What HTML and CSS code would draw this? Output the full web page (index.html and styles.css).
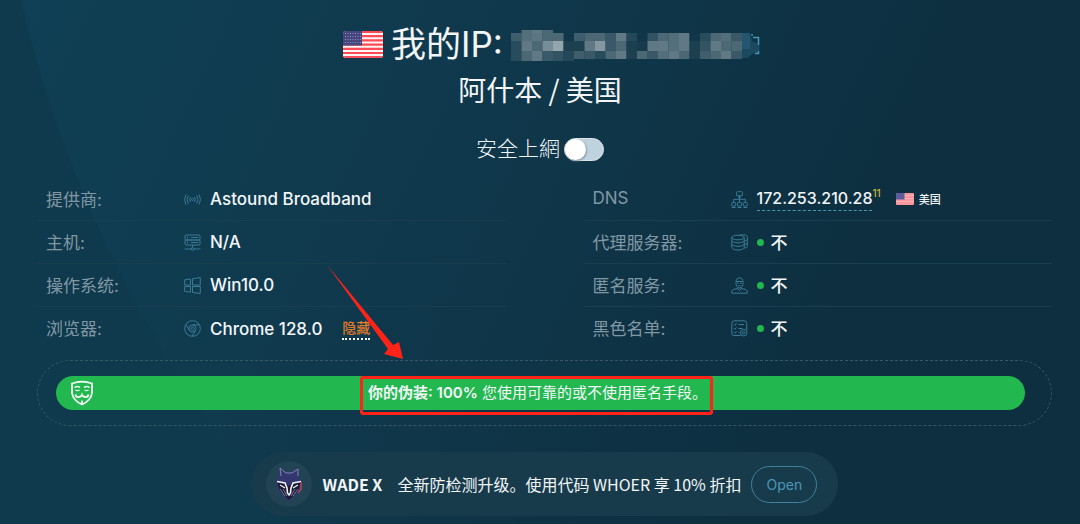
FILE: index.html
```
<!DOCTYPE html>
<html lang="zh">
<head>
    <meta charset="UTF-8">
    <meta name="viewport" content="width=device-width, initial-scale=1.0">
    <title>我的IP</title>
    <link rel="stylesheet" href="styles.css">
</head>
<body>
    <svg class="sprite" aria-hidden="true">
        <symbol id="flag-us" viewBox="0 0 40 27" preserveAspectRatio="none">
            <rect width="40" height="27" fill="#fff3f3"/>
            <path d="M0 1h40M0 5.200h40M0 9.400h40M0 13.600h40M0 17.800h40M0 22h40M0 26h40" stroke="#ff4b55" stroke-width="2.200"/>
            <rect width="19" height="14.500" fill="#46467f"/>
            <path d="M2 2.500h16M2 5.500h16M2 8.500h16M2 11.500h16" stroke="#8f8fc4" stroke-width="1" stroke-dasharray="1 1.500"/>
        </symbol>
        <symbol id="flag-us-small" viewBox="0 0 18 12" preserveAspectRatio="none">
            <rect width="18" height="12" fill="#f7969c"/>
            <path d="M0 2.500h18M0 5.500h18M0 8.500h18" stroke="#fbb0b4" stroke-width="1"/>
            <rect width="8.500" height="6.500" fill="#5c5c9c"/>
        </symbol>
    </svg>

    <header class="header">
        <h1 class="ip">
            <svg class="flag"><use href="#flag-us"/></svg>
            <span>我的IP:</span>
            <svg class="masked" viewBox="0 0 250 32" role="img" aria-label="IP">
                <g id="mask"></g>
                <path d="M231 3h6q4 3 4 8l7 3q2 5-1 8l-6 2-4 4h-6z" fill="#1b4a5f"/>
                <path d="M231 3h8v16h-8z" fill="#245671"/>
                <path d="M241 4v2M242 7.500h5.500V15M247.500 21v2.500H244" fill="none" stroke="#4596b8" stroke-width="1.500"/>
            </svg>
        </h1>
        <div class="city">阿什本 / 美国</div>
        <label class="safe">
            <span>安全上網</span>
            <input class="switch" type="checkbox">
        </label>
    </header>

    <main class="main">
        <div class="columns">
            <dl class="list">
                <div class="row">
                    <dt>提供商:</dt>
                    <dd>
                        <svg class="icon" viewBox="0 0 17 17"><circle cx="8.500" cy="8.500" r="1"/><path d="M6.500 6q-1.500 2.500 0 5M4.300 4.500q-2.600 4 0 8M2 3.500q-3 5 0 10M10.500 6q1.500 2.500 0 5M12.700 4.500q2.600 4 0 8M15 3.500q3 5 0 10"/></svg>
                        <span>Astound Broadband</span>
                    </dd>
                </div>
                <div class="row">
                    <dt>主机:</dt>
                    <dd>
                        <svg class="icon" viewBox="0 0 17 17"><rect x="1" y="1" width="15" height="5" rx="1"/><rect x="1" y="6" width="15" height="5" rx="1"/><path d="M3.500 2.500v2M3.500 7.500v2M7 3.500h7M7 8.500h7M8.500 11v2.500M.5 15h6.500M10 15h6.500"/><circle cx="8.500" cy="15" r="1.300"/></svg>
                        <span>N/A</span>
                    </dd>
                </div>
                <div class="row">
                    <dt>操作系统:</dt>
                    <dd>
                        <svg class="icon" viewBox="0 0 17 17"><path d="M.7 2.800L6.500 2v6H.7zM8.500 1.700L16.300.6V8H8.500zM.7 9.500h5.800v5.700l-5.800-.8zM8.500 9.500h7.800v7l-7.800-1.100z"/></svg>
                        <span>Win10.0</span>
                    </dd>
                </div>
                <div class="row">
                    <dt>浏览器:</dt>
                    <dd>
                        <svg class="icon" viewBox="0 0 17 17"><circle cx="8.500" cy="8.500" r="7.800"/><circle cx="8.500" cy="8.500" r="3.600"/><circle cx="8.500" cy="8.500" r="1.500"/><path d="M8.500 4.900h7M5.300 10.200L1.800 4.600M11.600 10.400L8 16.200"/></svg>
                        <span>Chrome 128.0</span>
                        <a class="hide" href="#">隐藏</a>
                    </dd>
                </div>
            </dl>
            <dl class="list">
                <div class="row">
                    <dt>DNS</dt>
                    <dd>
                        <svg class="icon" viewBox="0 0 17 17"><rect x="5.500" y=".7" width="6" height="4" rx=".8"/><rect x=".7" y="11.500" width="4" height="3.500" rx=".8"/><rect x="6.500" y="11.500" width="4" height="3.500" rx=".8"/><rect x="12.300" y="11.500" width="4" height="3.500" rx=".8"/><path d="M8.500 4.700v6.800M2.700 11.500V8.300h11.600v3.200M.7 16.500h4M6.500 16.500h4M12.300 16.500h4M7 6.200h3"/></svg>
                        <a class="dns" href="#">172.253.210.28</a><sup class="count">11</sup>
                        <svg class="flag-small"><use href="#flag-us-small"/></svg>
                        <span class="country">美国</span>
                    </dd>
                </div>
                <div class="row">
                    <dt>代理服务器:</dt>
                    <dd>
                        <svg class="icon" viewBox="0 0 17 17"><ellipse cx="7" cy="3.500" rx="6.200" ry="2.300"/><path d="M.8 3.500v3q1 2.300 6.200 2.300t6.200-2.300v-3M.8 6.500v3.500q1 2.300 6.200 2.300t6.200-2.300V6.500M.8 10v3.500q1 2.500 6.200 2.500t6.200-2.500V10M8 1.200q8-1.200 8.300 1.500v2.500q-.3 1.500-3 2M16.300 5.200v3.500q-.3 1.500-3 2M16.300 8.700v3.500q-.3 1.500-3 2"/></svg>
                        <i class="dot"></i>
                        <span>不</span>
                    </dd>
                </div>
                <div class="row">
                    <dt>匿名服务:</dt>
                    <dd>
                        <svg class="icon" viewBox="0 0 17 17"><path d="M5 5.500Q5 .8 8.500.8T12 5.500v2Q11 11 8.500 11T5 7.500zM5 4.500h7M6.300 6.200h1.500M9.200 6.200h1.500M7.500 8.500h2M6.800 10.500v1.500l1.700 1.500 1.700-1.500v-1.500M6.800 11.500Q1 12 .8 14v2.200h15.400V14q-.2-2-6-2.500"/></svg>
                        <i class="dot"></i>
                        <span>不</span>
                    </dd>
                </div>
                <div class="row">
                    <dt>黑色名单:</dt>
                    <dd>
                        <svg class="icon" viewBox="0 0 17 17"><path d="M9.500 15.500H3Q.8 15.500.8 13V3.300Q.8.8 3.300.8h9.900q2.500 0 2.500 2.500V10M3 4.300l1 1 1.500-2M3 8.300l1 1 1.500-2M3 12.300l1 1 1.500-2M7.500 4.500h5.500M7.500 8.500h4M7.500 12.500h1"/><circle cx="12.700" cy="12.700" r="3.300"/><circle cx="12.700" cy="12.700" r="1.200"/></svg>
                        <i class="dot"></i>
                        <span>不</span>
                    </dd>
                </div>
            </dl>
        </div>

        <div class="disguise">
            <div class="bar">
                <svg class="mask-icon" viewBox="0 0 24 26"><path d="M2 3.500Q12-.2 22 3.500v9.500q-1 7.500-10 11.500Q3 20.500 2 13z" stroke-width="1.800"/><path d="M4.500 7.500q3-2 5.500 0M14 7.500q2.500-2 5.500 0M5.500 10q2 1.200 4 0M14.500 10q2 1.200 4 0" stroke-width="1.300"/><path d="M5.500 14.500q.5 3 3.500 2.500 2.500-.5 3-2 .5 1.500 3 2 3 .5 3.500-2.500M12 20.500v3.500" stroke-width="1.800"/></svg>
                <p class="bar-text"><b>你的伪装: 100%</b> 您使用可靠的或不使用匿名手段。<span class="frame"></span>
                    <svg class="arrow" viewBox="0 0 76 96"><path d="M0 0L66 80L72 77L76 94L57 89L61 84z" fill="#ff2318"/></svg>
                </p>
            </div>
        </div>

        <div class="promo">
            <span class="avatar">
                <svg viewBox="0 0 26 34">
                    <path d="M4 0l6 5h6l6-4 1 10 3 4-2 9-5 5-6 5-6-5-4-5-3-9 3-5z" fill="#34366f"/>
                    <path d="M4 1l1 8M4 1l6 5h6l6-4v7" fill="none" stroke="#8084b0" stroke-width="1"/>
                    <path d="M1 15l8 1 4 3 4-3 8-1-3 9-4 4-5 5-5-5-4-4z" fill="#1a1c35"/>
                    <path d="M1 14.500l8 1.500 2 5 .5 5 1.500 2 1.500-2 .5-5 2-5 8-1.500" fill="none" stroke="#f0f1f5" stroke-width="1.600"/>
                    <path d="M4 18l5 3M22 18l-5 3" stroke="#f0f1f5" stroke-width="1.200"/>
                    <path d="M4 22l5 7M22 22l-5 7M7 22l4 7M19 22l-4 7" stroke="#8b8eaf" stroke-width=".8"/>
                    <path d="M25 15v7l-3 4" fill="none" stroke="#e0455a" stroke-width="1.200"/>
                </svg>
            </span>
            <strong class="brand">WADE X</strong>
            <span class="promo-text">全新防检测升级。使用代码 WHOER 享 10% 折扣</span>
            <button class="open" type="button">Open</button>
        </div>
    </main>

    <script>
        // hidden address, drawn as blocks
        const rows = [
            ['', '#546f7c', '#617985', '#4d6875'],
            ['#3f5d6c', '#546f7c', '#5d7682', '#4d6875', '#4d6875', '', '#3f5d6c', '#4d6875', '#4d6875', '#3a5968', '#617985', '#254858', '#123649', '#315362', '#4d6875', '#546f7c', '#617985', '#123649', '#294c5c', '#4d6875', '#546f7c', '#3a5968'],
            ['#294c5c', '#617985', '#4d6875', '#768c97', '#95a5ad', '#1d4051', '#1d4051', '#617985', '#8597a0', '#3a5968', '#4d6875', '#1d4051', '#173b4c', '#617985', '#617985', '#546f7c', '#617985', '#1d4051', '#315362', '#617985', '#4d6875', '#4d6875'],
            ['#294c5c', '#4d6875', '#617985', '#3a5968', '#315362', '#254858', '#3f5d6c', '#3a5968', '#294c5c', '#4d6875', '#617985', '#1d4051', '#4d6875', '#3a5968', '#546f7c', '#617985', '#4d6875', '#1d4051', '#3f5d6c', '#4d6875', '#617985', '#3a5968']
        ];
        const tops = [0, 3, 11, 21];
        const ends = [3, 11, 21, 29];
        let cells = '';
        rows.forEach((row, r) => {
            row.forEach((color, c) => {
                if (!color) return;
                const end = r === 3 && c < 6 ? 31 : ends[r];
                cells += `<rect x="${c * 10.5}" y="${tops[r]}" width="10.6" height="${end - tops[r]}" fill="${color}"/>`;
            });
        });
        document.getElementById('mask').innerHTML = cells;
    </script>
</body>
</html>
```
FILE: styles.css
```
* {
    box-sizing: border-box;
}
body {
    margin: 0;
    min-height: 100vh;
    color: #f2f6f8;
    font-family: Inter, "Noto Sans CJK SC", sans-serif;
    font-size: 17px;
    background: radial-gradient(circle at 1213px -278px, transparent 1223px, #0f394d 1225px), linear-gradient(115deg, #0f4055 0%, #10394d 35%, #0d2f40 75%);
}
.sprite {
    position: absolute;
    width: 0;
    height: 0;
}
.header {
    display: flex;
    flex-direction: column;
    align-items: center;
    padding-top: 18px;
}
.ip {
    display: flex;
    align-items: center;
    gap: 8px;
    margin: 0;
    padding-left: 24px;
    height: 52px;
    font-size: 35px;
    font-weight: 400;
    line-height: 52px;
}
.flag {
    width: 40px;
    height: 27px;
    border-radius: 3px;
}
.masked {
    width: 250px;
    height: 32px;
    margin-top: 4px;
}
.city {
    height: 40px;
    line-height: 38px;
    font-family: "Noto Sans CJK SC", sans-serif;
    font-size: 28px;
}
.safe {
    display: flex;
    align-items: center;
    gap: 4px;
    height: 30px;
    margin-top: 24px;
    font-size: 21px;
    font-weight: 300;
}
.safe span {
    padding-bottom: 4px;
}
.switch {
    appearance: none;
    display: flex;
    width: 40px;
    height: 23px;
    margin: 0;
    border: 1px solid #dfe3e5;
    border-radius: 12px;
    background: #bfd3de;
}
.switch::before {
    content: "";
    width: 21px;
    height: 21px;
    border-radius: 50%;
    background: #fff;
    box-shadow: 1px 1px 2px #8497a3;
}
.switch:checked {
    justify-content: flex-end;
}
.main {
    padding: 14px 28px 0 37px;
}
.columns {
    display: grid;
    grid-template-columns: 1fr 1fr;
    gap: 78px;
}
.list {
    margin: 0;
}
.row {
    display: flex;
    align-items: center;
    height: 43px;
    padding-left: 9px;
    border-bottom: 1px solid #183e50;
}
.row:last-child {
    border-bottom: 0;
}
dt {
    width: 138px;
    padding-bottom: 2px;
    color: #8198a3;
}
dd {
    display: flex;
    align-items: center;
    margin: 0;
    font-weight: 500;
}
.icon {
    width: 17px;
    height: 17px;
    margin-right: 9px;
    fill: none;
    stroke: #3b7b97;
    stroke-width: 1;
}
.hide {
    margin-left: 20px;
    color: #e07b2a;
    font-size: 14px;
    line-height: 20px;
    text-decoration: none;
    border-bottom: 2px dotted #f2f6f8;
}
.dns {
    color: inherit;
    font-size: 16px;
    line-height: 23px;
    text-decoration: none;
    border-bottom: 1px dashed #4596b8;
}
.count {
    align-self: flex-start;
    color: #c5bb3a;
    font-size: 10px;
    line-height: 12px;
}
.flag-small {
    width: 18px;
    height: 12px;
    margin-left: 15px;
    border-radius: 1px;
}
.country {
    margin-left: 5px;
    font-size: 11px;
}
.dot {
    width: 7px;
    height: 7px;
    margin-right: 7px;
    border-radius: 50%;
    background: #22b84f;
}
.dot + span {
    padding-bottom: 2px;
}
.disguise {
    margin-top: 10px;
    padding: 15px 26px 15px 18px;
    border: 1px dashed #375768;
    border-radius: 33px;
}
.bar {
    display: grid;
    grid-template-columns: 24px 1fr 24px;
    align-items: center;
    height: 34px;
    padding: 0 20px 0 14px;
    border-radius: 17px;
    background: #22b84f;
}
.mask-icon {
    width: 24px;
    height: 26px;
    fill: none;
    stroke: #f2fff5;
}
.bar-text {
    position: relative;
    justify-self: center;
    margin: 0;
    padding-bottom: 4px;
    font-size: 15px;
    white-space: nowrap;
}
.bar-text b {
    font-weight: 600;
}
/* highlight and pointer over the bar */
.frame {
    position: absolute;
    inset: -5px -6px -9px -8px;
    border: 3px solid #ff2318;
    border-radius: 3px;
}
.arrow {
    position: absolute;
    left: -41px;
    bottom: 45px;
    width: 76px;
    height: 96px;
    overflow: visible;
}
.promo {
    display: flex;
    align-items: center;
    width: fit-content;
    height: 64px;
    margin: 26px auto 0;
    padding: 0 21px 0 15px;
    border-radius: 32px;
    background: #183b4c;
    font-family: "Noto Sans CJK SC", sans-serif;
    font-size: 16px;
}
.avatar {
    display: flex;
    align-items: center;
    justify-content: center;
    width: 46px;
    height: 46px;
    margin-right: 11px;
    border-radius: 50%;
    background: #214354;
}
.avatar svg {
    width: 26px;
    height: 34px;
}
.brand {
    font-weight: 700;
}
.promo-text {
    margin: 0 10px 0 15px;
}
.open {
    width: 66px;
    height: 37px;
    border: 1px solid #41819c;
    border-radius: 19px;
    background: transparent;
    color: #4b97b7;
    font-family: Inter, sans-serif;
    font-size: 14px;
}
```
